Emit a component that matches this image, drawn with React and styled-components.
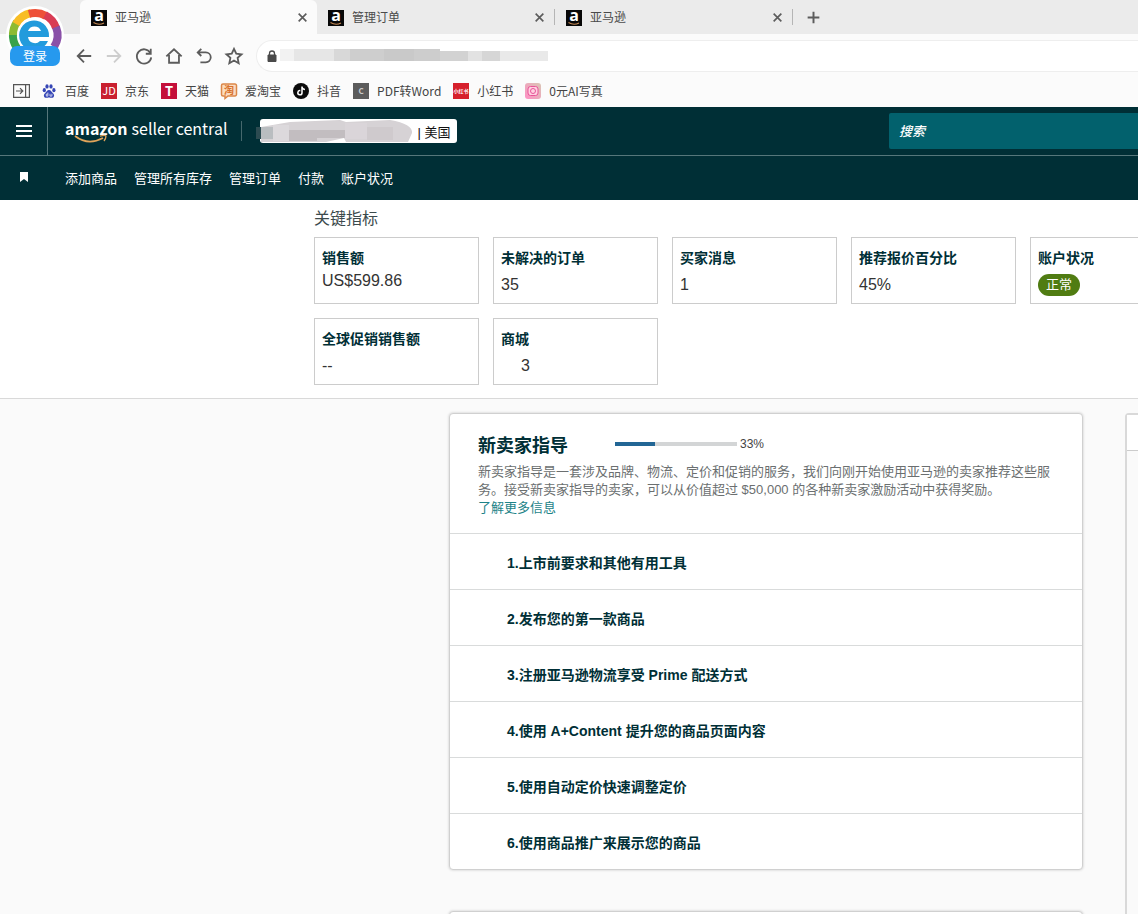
import React, { useState } from 'react';
import styled, { createGlobalStyle } from 'styled-components';
import { FaTiktok } from 'react-icons/fa';

const GlobalStyle = createGlobalStyle`
    * {
        box-sizing: border-box;
    }

    body {
        margin: 0;
        background: #fafafa;
        color: #002f36;
        font-family: "Liberation Sans", "Noto Sans CJK SC", sans-serif;
    }

    button, input {
        font: inherit;
        color: inherit;
    }

    h1, h2, p, dl, dt, dd, ol {
        margin: 0;
        padding: 0;
    }

    svg {
        display: block;
        flex: none;
        overflow: visible;
    }
`

const Page = styled.div`
    height: 100vh;
    min-height: 600px;
    overflow: hidden;
`

/* ---------- browser ---------- */

const Browser = styled.div`
    display: grid;
    grid-template-columns: 80px minmax(0, 1fr);
    grid-template-rows: 34px 41px 32px;
    grid-template-areas:
        "account tabs"
        "account tools"
        "marks marks";
    background: #fbfbfb;
    color: #4a4a4a;
    font-family: "Noto Sans CJK SC", sans-serif;
    font-size: 12px;
`

const Account = styled.button`
    grid-area: account;
    display: flex;
    align-items: flex-start;
    border: none;
    padding: 8px 0 0 8px;
    background: linear-gradient(#ebebeb 34px, #fbfbfb 34px);
    cursor: pointer;
`

const TabBar = styled.div`
    grid-area: tabs;
    display: flex;
    align-items: center;
    background: #ebebeb;
`

const Tab = styled.div`
    display: flex;
    align-items: center;
    gap: 8px;
    width: 237px;
    height: 34px;
    padding: 1px 9px 0 11px;
    background: ${({ $active }) => ($active ? '#fbfbfb' : 'transparent')};
    border-radius: ${({ $active }) => ($active ? '6px 6px 0 0' : '0')};
`

const Caption = styled.span`
    flex: 1;
    padding-bottom: 2px;
`

const TabLine = styled.span`
    width: 1px;
    height: 16px;
    background: #b5b5b5;
`

const IconButton = styled.button`
    display: flex;
    align-items: center;
    justify-content: center;
    width: ${({ $width }) => $width}px;
    height: 24px;
    padding: 0;
    border: none;
    background: none;
    color: ${({ disabled }) => (disabled ? '#cdcdcd' : '#5c5c5c')};
    cursor: pointer;
`

const Tools = styled.div`
    grid-area: tools;
    display: flex;
    align-items: center;
    margin-left: -11px;
    padding-top: 2px;
`

const Address = styled.div`
    flex: 1;
    display: flex;
    align-items: center;
    gap: 3px;
    height: 32px;
    margin-left: 7px;
    padding-left: 10px;
    background: #fff;
    border: 1px solid #eee;
    border-right: none;
    border-radius: 16px 0 0 16px;
`

const Bookmarks = styled.nav`
    grid-area: marks;
    display: flex;
    align-items: center;
    gap: 12px;
    padding-left: 13px;
`

const Bookmark = styled.a`
    display: flex;
    align-items: center;
    gap: 8px;
    color: #444;
    text-decoration: none;
    white-space: nowrap;
`

/* ---------- seller central header ---------- */

const Header = styled.header`
    background: #002f36;
    color: #fff;
    font-size: 13px;
`

const TopBar = styled.div`
    display: flex;
    align-items: center;
    height: 49px;
    border-bottom: 1px solid #56777b;
`

const MenuButton = styled.button`
    display: flex;
    align-items: center;
    justify-content: center;
    width: 48px;
    height: 48px;
    padding: 0;
    border: none;
    border-right: 1px solid #56777b;
    background: none;
    cursor: pointer;
`

const Brand = styled.a`
    display: flex;
    gap: 4px;
    position: relative;
    padding: 0 14px 6px 17px;
    color: #fff;
    font-family: "Noto Sans CJK SC", sans-serif;
    font-size: 16px;
    line-height: 20px;
    text-decoration: none;

    svg {
        position: absolute;
        left: 26px;
        top: 17px;
    }
`

const BrandLine = styled.span`
    width: 1px;
    height: 20px;
    background: #46686d;
`

const Store = styled.button`
    display: flex;
    align-items: center;
    gap: 4px;
    height: 24px;
    margin-left: 18px;
    padding: 0 7px 0 0;
    border: none;
    border-radius: 3px;
    background: #fff;
    color: #111;
    cursor: pointer;
`

const Search = styled.input`
    width: 249px;
    height: 36px;
    margin-left: auto;
    padding: 0 10px;
    border: none;
    border-radius: 2px 0 0 2px;
    background: #02616d;
    font-size: 13px;
    font-style: italic;

    &::placeholder {
        color: #fff;
        font-weight: 500;
        opacity: 1;
    }
`

const NavBar = styled.nav`
    display: flex;
    align-items: center;
    gap: 17px;
    height: 44px;
    padding-bottom: 2px;

    svg {
        width: 48px;
    }
`

const NavLink = styled.a`
    color: #fff;
    text-decoration: none;
`

/* ---------- metrics ---------- */

const Metrics = styled.section`
    height: 199px;
    padding: 7px 0 0 314px;
    overflow: hidden;
    background: #fff;
    border-bottom: 1px solid #d9d9d9;
`

const MetricsTitle = styled.h1`
    color: #3c4a4c;
    font-size: 16px;
    font-weight: 400;
    line-height: 24px;
`

const MetricGrid = styled.dl`
    display: grid;
    grid-template-columns: repeat(5, 165px);
    grid-auto-rows: 67px;
    gap: 14px;
    margin-top: 6px;
`

const MetricCard = styled.div`
    padding: 10px 7px;
    border: 1px solid #ccc;
`

const MetricLabel = styled.dt`
    font-size: 14px;
    font-weight: 700;
    line-height: 20px;
`

const MetricValue = styled.dd`
    display: flex;
    align-items: center;
    height: ${({ $tight }) => ($tight ? '26px' : '34px')};
    padding-left: ${({ $indent }) => ($indent ? '20px' : '0')};
    color: #333;
    font-size: 16px;
`

const Badge = styled.span`
    padding: 0 8px;
    border-radius: 11px;
    background: #507c12;
    color: #fff;
    font-size: 13px;
    line-height: 22px;
`

/* ---------- content ---------- */

const Content = styled.main`
    display: grid;
    grid-template-columns: minmax(634px, 2fr) minmax(300px, 1fr);
    gap: 42px;
    padding: 14px 0 0 449px;
`

const Column = styled.div`
    display: flex;
    flex-direction: column;
    gap: 41px;
`

const Panel = styled.section`
    min-height: ${({ $min }) => $min || 0}px;
    border: 1px solid #d0d0d0;
    border-radius: 4px;
    background: #fff;
    box-shadow: 0 0 2px 1px #e2e2e2;
`

const Side = styled.aside`
    min-height: 520px;
    border: 2px solid #d9d9d9;
    border-radius: 4px;
    background: #fafafa;
`

const SideHead = styled.div`
    height: 36px;
    background: #fff;
    border-bottom: 1px solid #ccc;
`

const Intro = styled.div`
    height: 119px;
    padding: 20px 28px 0;
    color: #6b6f70;
    font-size: 13px;
    line-height: 18px;
`

const IntroHead = styled.div`
    display: flex;
    align-items: center;
    margin-bottom: 4px;
`

const IntroTitle = styled.h2`
    margin-right: 47px;
    color: #002f36;
    font-size: 18px;
    font-weight: 700;
    line-height: 25px;
`

const Progress = styled.div`
    width: 122px;
    height: 4px;
    margin-bottom: 6px;
    background: #d3d5d6;
`

const ProgressFill = styled.div`
    height: 100%;
    background: #226695;
`

const Percent = styled.span`
    margin: 0 0 6px 3px;
    color: #444;
    font-size: 12px;
`

const MoreLink = styled.a`
    color: #1d8388;
    text-decoration: none;
`

const Steps = styled.ol`
    list-style: none;
`

const Step = styled.li`
    display: flex;
    align-items: center;
    height: 56px;
    padding-left: 57px;
    border-top: 1px solid #d9dbdb;
    font-size: 14px;
    font-weight: 700;
`

/* ---------- drawings ---------- */

const Stroke = ({ size = 18, width = 2, children }) => (
    <svg width={size} height={size} viewBox="0 0 20 20" fill="none" stroke="currentColor" strokeWidth={width}>
        {children}
    </svg>
)

const AccountLogo = () => (
    <svg width="54" height="60" viewBox="0 0 54 60">
        <circle cx="27" cy="27" r="29" fill="#fff" />
        <g fill="none" strokeWidth="8">
            <path d="M9 40A22 22 0 0 1 5 25" stroke="#39a24a" />
            <path d="M5 27A22 22 0 0 1 9 14" stroke="#8dbb31" />
            <path d="M8 16A22 22 0 0 1 23 5" stroke="#f8bd25" />
            <path d="M21 6A22 22 0 0 1 38 8" stroke="#ee5038" />
            <path d="M37 7A22 22 0 0 1 48 20" stroke="#d93c55" />
            <path d="M48 19A22 22 0 0 1 46 39" stroke="#8a50a8" />
        </g>
        <circle cx="27" cy="27" r="17.5" fill="#fff" />
        <path d="M41 29H20a7 7 0 0 0 12 4h8a15 15 0 1 1 1-4zM20 23h13a7 7 0 0 0-13 0z" fill="#229bdc" />
        <rect x="2" y="38" width="50" height="20" rx="7" fill="#2699ee" />
        <text x="27" y="53" fontSize="12" textAnchor="middle" fill="#fff">登录</text>
    </svg>
)

const Favicon = () => (
    <svg width="16" height="16" viewBox="0 0 16 16">
        <rect width="16" height="16" fill="#080808" />
        <text x="8" y="11" fontSize="16" fontWeight="700" textAnchor="middle" fill="#fff" fontFamily="Open Sans, sans-serif">a</text>
        <path d="M2.5 12.6Q8 15.8 13 12.9" fill="none" stroke="#c98b55" strokeWidth="1.1" />
    </svg>
)

const Tile = ({ fill, size, weight = 700, color = '#fff', children }) => (
    <svg width="16" height="16" viewBox="0 0 16 16">
        <rect width="16" height="16" fill={fill} />
        <text x="8" y={8 + size * 0.36} fontSize={size} fontWeight={weight} textAnchor="middle" fill={color}>{children}</text>
    </svg>
)

const PanelIcon = () => (
    <svg width="16" height="14" viewBox="0 0 16 14" fill="none" stroke="#555" strokeWidth="1.2">
        <path d="M.6.6h15.8v12.8H.6zM12.6.6v12.800M3 7h6.500M7 4.200L9.800 7 7 9.800" />
    </svg>
)

const BaiduIcon = () => (
    <svg width="16" height="16" viewBox="0 0 16 16" fill="#3545b5">
        <ellipse cx="3.3" cy="7.2" rx="1.6" ry="2.1" />
        <ellipse cx="6" cy="3.4" rx="1.6" ry="2.2" />
        <ellipse cx="10" cy="3.4" rx="1.6" ry="2.2" />
        <ellipse cx="12.9" cy="7.2" rx="1.6" ry="2.1" />
        <path d="M8 7c2 0 2.6 2 4 3.2 2 1.800 1.200 4.600-1.200 4.600-1.200 0-1.800-.3-2.800-.3s-1.600.3-2.800.3C2.800 14.800 2 12 4 10.200 5.400 9 6 7 8 7z" />
        <path d="M6.900 9.500v3.600H5.300v-2h1.600M9 10.800v2.300h1.900v-2.300" fill="none" stroke="#fff" strokeWidth=".7" />
    </svg>
)

const TaobaoIcon = () => (
    <svg width="16" height="16" viewBox="0 0 16 16">
        <path d="M2 1h12a1.500 1.500 0 0 1 1.500 1.500v9A1.500 1.500 0 0 1 14 13H7l-3 2.500V13H2a1.500 1.500 0 0 1-1.500-1.500v-9A1.500 1.500 0 0 1 2 1z" fill="#fbdcc0" stroke="#dc8748" strokeWidth="1.500" />
        <text x="8" y="11" fontSize="10" fontWeight="700" textAnchor="middle" fill="#d8702a">淘</text>
    </svg>
)

const DouyinIcon = () => (
    <svg width="16" height="16" viewBox="0 0 16 16">
        <circle cx="8" cy="8" r="8" fill="#0b0b0b" />
        <FaTiktok x="3.500" y="3.500" size="9" color="#fff" />
    </svg>
)

const PhotoIcon = () => (
    <svg width="16" height="16" viewBox="0 0 16 16" fill="none" stroke="#e8559a">
        <defs>
            <linearGradient id="photo" x1="0" y1="1" x2="1" y2="0">
                <stop offset="0" stopColor="#ff8fc4" />
                <stop offset="1" stopColor="#d9c6b4" />
            </linearGradient>
        </defs>
        <rect width="16" height="16" rx="3" fill="url(#photo)" stroke="none" />
        <rect x="3" y="3.500" width="10" height="9" rx="2.500" fill="#ffd0e0" />
        <circle cx="8" cy="8" r="2.500" />
    </svg>
)

const BLOCKS = [
    [0, 14, '#f2f2f2'], [14, 40, '#e6e6e6'], [54, 16, '#d8d8d8'], [70, 34, '#cecece'], [104, 30, '#c9c9c9'],
    [134, 26, '#cdcdcd'], [160, 28, '#d2d2d2'], [188, 14, '#e2e2e2'], [202, 18, '#d6d6d6'], [220, 48, '#e9e9e9'],
]

const AddressMask = () => (
    <svg width="268" height="16" viewBox="0 0 268 16">
        {BLOCKS.map(([x, w, fill]) => (
            <rect key={x} x={x} y={x < 160 ? 1 : 3} width={w} height={x < 160 ? 12 : 10} fill={fill} />
        ))}
    </svg>
)

const StoreMask = () => (
    <svg width="153" height="24" viewBox="0 0 153 24">
        <rect x="-4" y="8" width="5" height="12" fill="#2c4b51" />
        <path d="M1 8L30 3 80 1 86 3 130 1Q153 5 152 14L148 23H86L84 19 66 23H1z" fill="#d6d2d5" />
        <path d="M1 8h12v12H1z" fill="#b9bdc0" />
        <path d="M13 6h16v16H13z" fill="#dcd9dc" />
        <path d="M29 11h28v11H29zM57 11h28v8H57z" fill="#c2bdc0" />
        <path d="M85 4h22v16H85z" fill="#dad5d9" />
        <path d="M107 8h26v13h-26z" fill="#cfcacd" />
    </svg>
)

/* ---------- data ---------- */

const TABS = ['亚马逊', '管理订单', '亚马逊']

const BOOKMARKS = [
    { name: '百度', icon: <BaiduIcon /> },
    { name: '京东', icon: <Tile fill="#c9202f" size={11} weight={400}>JD</Tile> },
    { name: '天猫', icon: <Tile fill="#c40f3a" size={13}>T</Tile> },
    { name: '爱淘宝', icon: <TaobaoIcon /> },
    { name: '抖音', icon: <DouyinIcon /> },
    { name: 'PDF转Word', icon: <Tile fill="#5c5c5c" size={8} color="#ccc">C</Tile> },
    { name: '小红书', icon: <Tile fill="#d6202c" size={5}>小红书</Tile> },
    { name: '0元AI写真', icon: <PhotoIcon /> },
]

const LINKS = ['添加商品', '管理所有库存', '管理订单', '付款', '账户状况']

const METRICS = [
    { label: '销售额', value: 'US$599.86', tight: true },
    { label: '未解决的订单', value: '35' },
    { label: '买家消息', value: '1' },
    { label: '推荐报价百分比', value: '45%' },
    { label: '账户状况', value: <Badge>正常</Badge> },
    { label: '全球促销销售额', value: '--' },
    { label: '商城', value: '3', indent: true },
]

const STEPS = [
    '上市前要求和其他有用工具',
    '发布您的第一款商品',
    '注册亚马逊物流享受 Prime 配送方式',
    '使用 A+Content 提升您的商品页面内容',
    '使用自动定价快速调整定价',
    '使用商品推广来展示您的商品',
]

const BrowserBar = () => (
    <Browser>
        <Account>
            <AccountLogo />
        </Account>
        <TabBar>
            {TABS.map((title, i) => (
                <React.Fragment key={i}>
                    <Tab $active={i === 0}>
                        <Favicon />
                        <Caption>{title}</Caption>
                        <IconButton $width={12} aria-label="关闭">
                            <Stroke size={11} width={3}><path d="M3 3l14 14M17 3L3 17" /></Stroke>
                        </IconButton>
                    </Tab>
                    {i > 0 && <TabLine />}
                </React.Fragment>
            ))}
            <IconButton $width={40} aria-label="新标签">
                <Stroke size={13} width={3}><path d="M10 1v18M1 10h18" /></Stroke>
            </IconButton>
        </TabBar>
        <Tools>
            <IconButton $width={30} aria-label="后退">
                <Stroke><path d="M18 10H3M10 3l-7 7 7 7" /></Stroke>
            </IconButton>
            <IconButton $width={30} aria-label="前进" disabled>
                <Stroke><path d="M2 10h15M10 3l7 7-7 7" /></Stroke>
            </IconButton>
            <IconButton $width={30} aria-label="刷新">
                <Stroke><path d="M17 6.500A8 8 0 1 0 18 11.500M17.500 2v5.500H12" /></Stroke>
            </IconButton>
            <IconButton $width={30} aria-label="主页">
                <Stroke><path d="M1.500 10.500L10 2.500l8.500 8M4.500 9v8.500h11V9" /></Stroke>
            </IconButton>
            <IconButton $width={30} aria-label="恢复">
                <Stroke><path d="M7 2L3 6l4 4M3 6h9a5.500 5.500 0 0 1 0 11H6" /></Stroke>
            </IconButton>
            <IconButton $width={30} aria-label="收藏">
                <Stroke><path d="M10 2l2.500 5.400 5.900.7-4.400 4 1.200 5.900-5.200-3-5.200 3L6 12.100l-4.400-4 5.900-.7z" /></Stroke>
            </IconButton>
            <Address>
                <svg width="10" height="12" viewBox="0 0 10 12">
                    <path d="M1 5h8v6.500H1z" fill="#4a4a4a" stroke="#4a4a4a" />
                    <path d="M2.500 5V3.500a2.500 2.500 0 0 1 5 0V5" fill="none" stroke="#4a4a4a" strokeWidth="1.300" />
                </svg>
                <AddressMask />
            </Address>
        </Tools>
        <Bookmarks>
            <IconButton $width={16} aria-label="侧边栏">
                <PanelIcon />
            </IconButton>
            {BOOKMARKS.map(({ name, icon }) => (
                <Bookmark href="#" key={name}>
                    {icon}
                    <Caption>{name}</Caption>
                </Bookmark>
            ))}
        </Bookmarks>
    </Browser>
)

const SellerHeader = () => {
    const [query, setQuery] = useState('')

    return (
        <Header>
            <TopBar>
                <MenuButton aria-label="菜单">
                    <svg width="16" height="12" viewBox="0 0 16 12" fill="#fff">
                        <path d="M0 0h16v2H0zM0 5h16v2H0zM0 10h16v2H0z" />
                    </svg>
                </MenuButton>
                <Brand href="#">
                    <b>amazon</b>
                    <span>seller central</span>
                    <svg width="34" height="8" viewBox="0 0 34 8" fill="none" stroke="#dfa45a">
                        <path d="M1 1Q14 11 29 3" strokeWidth="1.800" />
                        <path d="M26 1.200Q31-.2 32 1 32 3.500 30 6" strokeWidth="1.300" />
                    </svg>
                </Brand>
                <BrandLine />
                <Store>
                    <StoreMask />
                    <span>| 美国</span>
                </Store>
                <Search
                    aria-label="搜索"
                    placeholder="搜索"
                    value={query}
                    onChange={e => setQuery(e.target.value)}
                />
            </TopBar>
            <NavBar>
                <svg height="12" viewBox="0 0 48 12" fill="#fff">
                    <path d="M20 1h8v10l-4-3-4 3z" />
                </svg>
                {LINKS.map(link => <NavLink href="#" key={link}>{link}</NavLink>)}
            </NavBar>
        </Header>
    )
}

const GuidePanel = ({ percent }) => (
    <Panel>
        <Intro>
            <IntroHead>
                <IntroTitle>新卖家指导</IntroTitle>
                <Progress>
                    <ProgressFill style={{ width: `${percent}%` }} />
                </Progress>
                <Percent>{percent}%</Percent>
            </IntroHead>
            <p>
                新卖家指导是一套涉及品牌、物流、定价和促销的服务，我们向刚开始使用亚马逊的卖家推荐这些服务。接受新卖家指导的卖家，可以从价值超过 $50,000 的各种新卖家激励活动中获得奖励。
            </p>
            <MoreLink href="#">了解更多信息</MoreLink>
        </Intro>
        <Steps>
            {STEPS.map((step, i) => <Step key={step}>{i + 1}.{step}</Step>)}
        </Steps>
    </Panel>
)

const App = () => (
    <>
        <GlobalStyle />
        <Page>
            <BrowserBar />
            <SellerHeader />
            <Metrics>
                <MetricsTitle>关键指标</MetricsTitle>
                <MetricGrid>
                    {METRICS.map(({ label, value, tight, indent }) => (
                        <MetricCard key={label}>
                            <MetricLabel>{label}</MetricLabel>
                            <MetricValue $tight={tight} $indent={indent}>{value}</MetricValue>
                        </MetricCard>
                    ))}
                </MetricGrid>
            </Metrics>
            <Content>
                <Column>
                    <GuidePanel percent={33} />
                    <Panel $min={120} />
                </Column>
                <Side>
                    <SideHead />
                </Side>
            </Content>
        </Page>
    </>
)

export default App;
